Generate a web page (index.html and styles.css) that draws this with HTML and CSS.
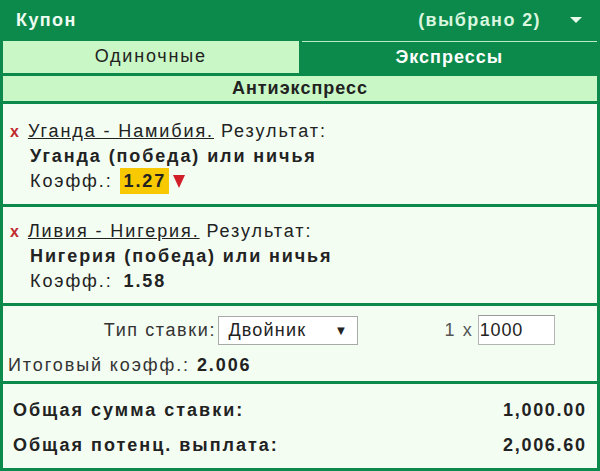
FILE: index.html
```html
<!DOCTYPE html>
<html lang="ru">
  <head>
    <meta charset="UTF-8" />
    <meta name="viewport" content="width=device-width, initial-scale=1.0" />
    <title>Купон</title>
    <link rel="stylesheet" href="styles.css">
  </head>
  <body>
    <div class="coupon">
      <div class="head">
        <span class="title">Купон</span>
        <span class="count">(выбрано 2)</span>
        <span class="arrow"></span>
      </div>
      <div class="tabs">
        <div class="tab">Одиночные</div>
        <div class="tab active">Экспрессы</div>
      </div>
      <div class="mode">Антиэкспресс</div>

      <div class="bet">
        <div class="line"><span class="del">x</span><a class="match">Уганда - Намибия.</a> Результат:</div>
        <div class="line pick">Уганда (победа) или ничья</div>
        <div class="line">Коэфф.: <b class="odd down">1.27</b><span class="drop"></span></div>
      </div>

      <div class="bet">
        <div class="line"><span class="del">x</span><a class="match">Ливия - Нигерия.</a> Результат:</div>
        <div class="line pick">Нигерия (победа) или ничья</div>
        <div class="line">Коэфф.: <b class="odd">1.58</b></div>
      </div>

      <div class="stake">
        <div class="stake-row">
          <span class="lbl">Тип ставки:</span>
          <div class="select">Двойник <span class="sel-arrow">▼</span></div>
          <span class="mult">1 x</span>
          <div class="amount">1000</div>
        </div>
        <div class="total-odd">Итоговый коэфф.: <b>2.006</b></div>
      </div>

      <div class="totals">
        <div class="sum"><span>Общая сумма ставки:</span><span class="num">1,000.00</span></div>
        <div class="sum"><span>Общая потенц. выплата:</span><span class="num">2,006.60</span></div>
      </div>
    </div>
  </body>
</html>
```

FILE: styles.css
```css
body {
  margin: 0;
  font-family: "Liberation Sans", Arial, sans-serif;
  color: #222;
}
.coupon {
  width: 600px;
  height: 471px;
  box-sizing: border-box;
  background: #0b8a4c;
  padding: 0 3px 3px 3px;
  display: flex;
  flex-direction: column;
  gap: 3px;
}
.head {
  height: 41px;
  display: flex;
  align-items: center;
  font-weight: bold;
  font-size: 18px;
  letter-spacing: 1.4px;
  padding: 0 15px 0 13px;
  margin-bottom: -3px;
}
.title {
  flex: 1;
  color: #eefcf2;
}
.count {
  color: #d9f6df;
}
.arrow {
  margin-left: 29px;
  width: 0;
  height: 0;
  border-left: 6px solid transparent;
  border-right: 6px solid transparent;
  border-top: 6px solid #e8fbe9;
}
.tabs {
  display: flex;
  gap: 3px;
  height: 32px;
}
.tab {
  flex: 1;
  display: flex;
  align-items: center;
  justify-content: center;
  font-size: 18px;
  letter-spacing: 1.8px;
  background: #c9f8c6;
  color: #222;
}
.tab.active {
  background: #0b8a4c;
  border-top: 1px solid #b9ecc4;
  color: #fff;
  font-weight: bold;
  letter-spacing: 1px;
}
.mode {
  height: 25px;
  background: #c9f8c6;
  display: flex;
  align-items: center;
  justify-content: center;
  font-size: 18px;
  font-weight: bold;
  letter-spacing: 1px;
  color: #222;
}
.bet {
  background: #f3fdf2;
  height: 101px;
  box-sizing: border-box;
  padding: 15px 0 0 7px;
  font-size: 18px;
  letter-spacing: 1.9px;
}
.bet + .bet {
  height: 96px;
  padding-top: 12px;
}
.line {
  height: 25px;
  line-height: 25px;
}
.del {
  color: #c12a2f;
  font-weight: bold;
  font-size: 16px;
  letter-spacing: 0;
  margin-right: 9px;
}
.match {
  text-decoration: underline;
  color: #222;
}
.pick {
  font-weight: bold;
  padding-left: 20px;
}
.line:last-child {
  padding-left: 20px;
}
.odd {
  padding: 3px 3px 3px 4px;
}
.odd.down {
  background: #f8c800;
}
.drop {
  display: inline-block;
  margin-left: 4px;
  width: 0;
  height: 0;
  border-left: 6px solid transparent;
  border-right: 6px solid transparent;
  border-top: 13px solid #d1202a;
  vertical-align: -1px;
}
.stake {
  background: #f3fdf2;
  height: 75px;
  box-sizing: border-box;
  padding-top: 9px;
  font-size: 18px;
  letter-spacing: 1.6px;
}
.stake-row {
  display: flex;
  align-items: center;
  height: 30px;
}
.lbl {
  width: 213px;
  text-align: right;
  margin-right: -1.6px;
  color: #333;
}
.select {
  margin-left: 4px;
  width: 140px;
  height: 29px;
  box-sizing: border-box;
  border: 1px solid #a9a9a9;
  background: #fff;
  padding: 0 10px 0 9px;
  display: flex;
  align-items: center;
  justify-content: space-between;
  letter-spacing: 1.2px;
}
.sel-arrow {
  font-size: 13px;
  letter-spacing: 0;
}
.mult {
  width: 115px;
  text-align: right;
  margin-right: -1.6px;
  color: #555;
}
.amount {
  margin-left: 6px;
  width: 77px;
  height: 30px;
  box-sizing: border-box;
  border: 1px solid #b4b4b4;
  border-top-color: #999;
  background: #fff;
  padding-left: 1px;
  display: flex;
  align-items: center;
  letter-spacing: 0.8px;
}
.total-odd {
  margin-top: 8px;
  height: 25px;
  line-height: 25px;
  padding-left: 5px;
  letter-spacing: 1.9px;
  color: #333;
}
.total-odd b {
  color: #222;
}
.totals {
  background: #f3fdf2;
  flex: 1;
  padding: 14px 12px 0 10px;
  font-size: 18px;
  font-weight: bold;
  letter-spacing: 2px;
}
.sum {
  display: flex;
  justify-content: space-between;
  height: 35px;
  line-height: 25px;
}
.num {
  letter-spacing: 1.7px;
  margin-right: -1.7px;
}
```
